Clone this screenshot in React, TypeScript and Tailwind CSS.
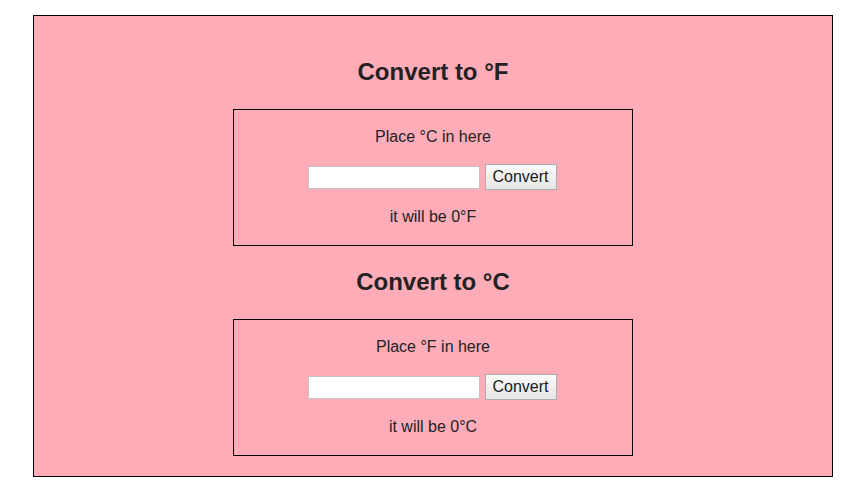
import React, { useState } from 'react';

function Converter({ title, label, unit, toF }: { title: string; label: string; unit: string; toF: boolean }) {
  const [value, setValue] = useState('');
  const [result, setResult] = useState(0);

  const convert = () => {
    const n = parseFloat(value) || 0;
    setResult(toF ? Math.round((n * 9) / 5 + 32) : Math.round(((n - 32) * 5) / 9));
  };

  return (
    <>
      <h2 className="text-center text-[24px] leading-[28px] font-bold mb-[23px]">{title}</h2>
      <div className="mx-auto w-[400px] h-[137px] border border-black flex flex-col items-center pt-[18px]">
        <p className="leading-[18px]">{label}</p>
        <div className="mt-[18px] flex items-center gap-[5px] h-[26px] -translate-x-px">
          <input
            value={value}
            onChange={(e) => setValue(e.target.value)}
            className="w-[172px] h-[23px] bg-white border border-[#c4c4c4] outline-none px-1 text-[15px]"
          />
          <button
            onClick={convert}
            className="w-[72px] h-[26px] border border-[#acacac] bg-gradient-to-b from-[#fafafa] to-[#e6e6e6] text-[16px] leading-[18px] text-[#1a1a1a]"
          >
            Convert
          </button>
        </div>
        <p className="mt-[18px] leading-[18px]">
          it will be {result}
          {unit}
        </p>
      </div>
    </>
  );
}

export default function App() {
  return (
    <div className="min-h-[504px] bg-white pt-[15px] pl-[33px] font-['Liberation_Sans',Arial,sans-serif] text-[16px] text-[#222]">
      <div className="w-[800px] h-[462px] border border-black bg-[#ffacb9] pt-[42px] flex flex-col">
        <Converter title="Convert to °F" label="Place °C in here" unit="°F" toF={true} />
        <div className="h-[22px]" />
        <Converter title="Convert to °C" label="Place °F in here" unit="°C" toF={false} />
      </div>
    </div>
  );
}
